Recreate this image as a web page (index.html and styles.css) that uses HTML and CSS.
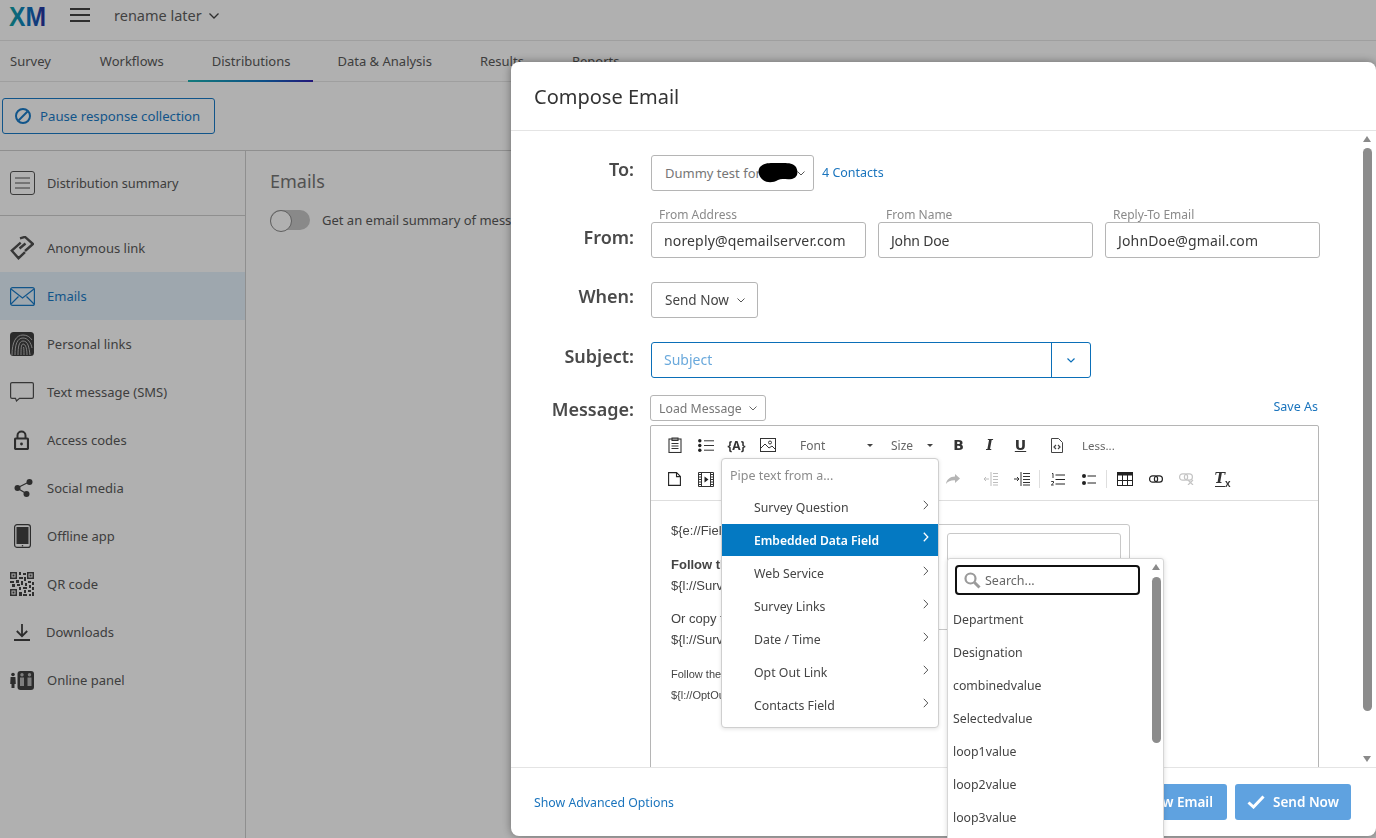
FILE: index.html
```html
<!DOCTYPE html>
<html lang="en">
<head>
<meta charset="utf-8">
<title>Compose Email</title>
<link rel="stylesheet" href="styles.css">
</head>
<body>
<div class="page">
  <header class="topbar">
    <svg class="logo" width="38" height="24" viewBox="0 0 38 24"><defs><linearGradient id="xm" x1="0" x2="1" y1="0" y2="0"><stop offset="0" stop-color="#12a5a5"/><stop offset=".5" stop-color="#0c7cc4"/><stop offset="1" stop-color="#2a2a9e"/></linearGradient></defs><text x="0" y="22.500" font-family="Liberation Sans" font-weight="700" font-size="28" fill="url(#xm)" textLength="37" lengthAdjust="spacingAndGlyphs">XM</text></svg>
    <svg class="burger" width="20" height="14" viewBox="0 0 20 14"><path d="M0 1h20M0 7h20M0 13h20" stroke="#444" stroke-width="2"/></svg>
    <span class="project">rename later</span>
    <svg class="chev-top" width="10" height="6" viewBox="0 0 10 6"><path d="M.5.5 5 5 9.500.5" fill="none" stroke="#444" stroke-width="1.300"/></svg>
  </header>
  <nav class="tabs">
    <a class="tab first">Survey</a>
    <a class="tab">Workflows</a>
    <a class="tab active">Distributions</a>
    <a class="tab">Data &amp; Analysis</a>
    <a class="tab">Results</a>
    <a class="tab">Reports</a>
  </nav>
  <div class="actionbar">
    <button class="pause">
      <svg width="18" height="18" viewBox="0 0 18 18"><circle cx="9" cy="9" r="7" fill="none" stroke="currentColor" stroke-width="2"/><path d="M4.500 13.500 13.500 4.500" stroke="currentColor" stroke-width="2"/></svg>
      Pause response collection
    </button>
  </div>
  <div class="content">
    <aside class="side">
      <div class="side-summary">
        <span class="ico"><svg width="26" height="24" viewBox="0 0 26 24"><rect x=".5" y=".5" width="24" height="23" rx="2.500" fill="none" stroke="#555"/><path d="M5 7h15M5 12h15M5 17h15" stroke="#555"/></svg></span>
        Distribution summary
      </div>
      <ul class="side-list">
        <li class="side-item"><span class="ico"><svg width="24" height="24" viewBox="0 0 24 24" fill="none" stroke="#505050" stroke-width="2.400"><path d="M10 2.300 15 .9 23 8l-8 7"/><path d="M10.700 6.700 1.800 14.700l6.700 7.500 6.500-6"/><path d="M9.500 12.500 15.500 7.500"/></svg></span>Anonymous link</li>
        <li class="side-item selected"><span class="ico"><svg width="25" height="19" viewBox="0 0 25 19" fill="none" stroke="currentColor" stroke-width="1.200"><rect x=".6" y=".6" width="23.800" height="17.800" rx="2"/><path d="M1 2l11.500 9L24 2M1 17l7.500-7.500M24 17l-7.500-7.500"/></svg></span>Emails</li>
        <li class="side-item"><span class="ico"><svg width="24" height="24" viewBox="0 0 24 24"><rect width="24" height="24" rx="3.500" fill="#3f3f3f"/><g fill="none" stroke="#b9b9b9" stroke-width="1"><path d="M2 23C2 10 6 3 13 3c4 0 7 2 9 5"/><path d="M5 23c0-10 2-17 8-17 5 0 8 5 9 10"/><path d="M8 23c0-8 1-14 5-14 5 0 6 6 7 14"/><path d="M11 23c0-5 0-11 2-11 3 0 4 6 4 11"/><path d="M14 23c0-3 0-7-.5-8"/></g></svg></span>Personal links</li>
        <li class="side-item"><span class="ico"><svg width="24" height="20" viewBox="0 0 24 20" fill="none" stroke="#505050" stroke-width="1.200"><path d="M2 .6h20a1.400 1.400 0 0 1 1.400 1.400v13a1.400 1.400 0 0 1-1.400 1.400H9.500L6.500 19l-1-2.600H2A1.400 1.400 0 0 1 .6 15V2A1.400 1.400 0 0 1 2 .6Z"/></svg></span>Text message (SMS)</li>
        <li class="side-item"><span class="ico ico-in"><svg width="15" height="20" viewBox="0 0 15 20"><path d="M3.500 9V5.500a4 4 0 0 1 8 0V9" fill="none" stroke="#424242" stroke-width="2"/><rect x="1" y="8.500" width="13" height="10.500" rx="1" fill="none" stroke="#424242" stroke-width="2.200"/><circle cx="7.500" cy="14" r="1.400" fill="#424242"/></svg></span>Access codes</li>
        <li class="side-item"><span class="ico ico-in"><svg width="19" height="18" viewBox="0 0 19 18"><path d="M3 9 15 3M3 9l10 6" stroke="#424242" stroke-width="1.200"/><circle cx="3.500" cy="9" r="3" fill="#424242"/><circle cx="15.500" cy="3" r="3" fill="#424242"/><circle cx="12.500" cy="15" r="3" fill="#424242"/></svg></span>Social media</li>
        <li class="side-item"><span class="ico ico-in"><svg width="17" height="24" viewBox="0 0 17 24"><rect x=".6" y=".6" width="15.800" height="22.800" rx="2.500" fill="none" stroke="#424242" stroke-width="1.200"/><rect x="2.500" y="3" width="12" height="17" fill="#424242"/><circle cx="8.500" cy="21.800" r=".8" fill="#424242"/></svg></span>Offline app</li>
        <li class="side-item"><span class="ico"><svg width="24" height="24" viewBox="0 0 24 24" fill="#444"><path d="M0 0h7v7H0zM1.500 1.500v4h4v-4zM2.500 2.500h2v2h-2zM17 0h7v7h-7zM18.500 1.500v4h4v-4zM19.500 2.500h2v2h-2zM0 17h7v7H0zM1.500 18.500v4h4v-4zM2.500 19.500h2v2h-2z" fill-rule="evenodd"/><path d="M9 0h2v3H9zM13 1h3v2h-3zM9 5h4v2H9zM14 5h2v4h-2zM0 9h4v2H0zM6 8h3v3H6zM11 9h2v4h-2zM18 9h3v2h-3zM22 10h2v3h-2zM2 12h3v3H2zM7 12h3v2H7zM15 11h2v3h-2zM19 13h2v3h-2zM9 15h2v3H9zM13 15h4v2h-4zM22 15h2v3h-2zM9 20h3v4H9zM14 18h2v3h-2zM18 18h3v2h-3zM13 22h4v2h-4zM19 22h2v2h-2zM22 20h2v4h-2z"/></svg></span>QR code</li>
        <li class="side-item downloads"><span class="ico ico-in"><svg width="16" height="17" viewBox="0 0 16 17" fill="none" stroke="#424242" stroke-width="1.800"><path d="M8 0v12M2.800 7 8 12.200 13.200 7M0 16h16"/></svg></span>Downloads</li>
        <li class="side-item"><span class="ico"><svg width="24" height="19" viewBox="0 0 24 19"><rect x="7.500" y="0" width="16.500" height="19" rx="3" fill="#424242"/><g fill="#b9b9b9"><circle cx="12" cy="3.800" r="1.700"/><path d="M10 6.500h4v8.500h-4z"/><circle cx="19.500" cy="3.800" r="1.700"/><path d="M17.500 6.500h4v8.500h-4z"/></g><circle cx="3" cy="3.500" r="1.800" fill="#424242"/><path d="M.6 6h4.800l.4 7H4.500v4h-3v-4H.2z" fill="#424242"/></svg></span>Online panel</li>
      </ul>
    </aside>
    <main class="main">
      <h2 class="main-title">Emails</h2>
      <div class="summary-row">
        <span class="toggle"></span>
        <span>Get an email summary of messages sent from this distribution</span>
      </div>
    </main>
  </div>
</div>

<div class="overlay"></div>

<section class="modal">
  <h1 class="modal-head">Compose Email</h1>
  <div class="modal-body">
    <div class="row row-to">
      <label class="row-label">To:</label>
      <div class="box select to-select">Dummy test for <svg class="chev" width="8" height="5" viewBox="0 0 8 5"><path d="M.5.5 4 4 7.500.5" fill="none" stroke="#555"/></svg><svg class="blob" width="40" height="22" viewBox="0 0 40 22"><path d="M2 5C6 0 14 1 20 1s15-1 18 4c3 6 1 11-4 12-6 1-10-1-14 1-5 3-11 3-15 0C1 15-1 9 2 5Z" fill="#000"/></svg></div>
      <a class="link contacts">4 Contacts</a>
    </div>
    <div class="row row-from">
      <label class="row-label">From:</label>
      <div class="field"><span class="field-label">From Address</span><div class="box input">noreply@qemailserver.com</div></div>
      <div class="field"><span class="field-label">From Name</span><div class="box input input-name">John Doe</div></div>
      <div class="field"><span class="field-label">Reply-To Email</span><div class="box input">JohnDoe@gmail.com</div></div>
    </div>
    <div class="row row-when">
      <label class="row-label">When:</label>
      <div class="box select when-select">Send Now <svg class="chev" width="8" height="5" viewBox="0 0 8 5"><path d="M.5.5 4 4 7.500.5" fill="none" stroke="#555"/></svg></div>
    </div>
    <div class="row row-subject">
      <label class="row-label">Subject:</label>
      <div class="subject">
        <span class="subject-input">Subject</span>
        <span class="subject-btn"><svg width="8" height="5" viewBox="0 0 8 5"><path d="M.5.500 4 4 7.500.5" fill="none" stroke="#0b6fb8" stroke-width="1.200"/></svg></span>
      </div>
    </div>
    <div class="row row-message">
      <label class="row-label">Message:</label>
      <div class="message">
        <div class="message-top">
          <button class="load">Load Message <svg width="8" height="5" viewBox="0 0 8 5"><path d="M.5.5 4 4 7.500.5" fill="none" stroke="#666"/></svg></button>
          <a class="link save-as">Save As</a>
        </div>
        <div class="editor">
          <div class="toolbar">
            <div class="tb-row">
              <span class="tb"><svg width="14" height="16" viewBox="0 0 14 16" fill="none" stroke="#333" stroke-width="1.100"><rect x="1" y="2" width="12" height="13.500"/><path d="M4 1h6v2.500H4zM3.500 6.500h7M3.500 9h7M3.500 11.500h7"/></svg></span>
              <span class="tb"><svg width="16" height="13" viewBox="0 0 16 13"><g fill="#222"><circle cx="1.800" cy="1.800" r="1.700"/><circle cx="1.800" cy="6.500" r="1.700"/><circle cx="1.800" cy="11.200" r="1.700"/></g><path d="M6 1.800h10M6 6.500h10M6 11.200h10" stroke="#333"/></svg></span>
              <span class="tb tb-piped">{A}</span>
              <span class="tb"><svg width="16" height="14" viewBox="0 0 16 14" fill="none" stroke="#333"><rect x=".5" y=".5" width="15" height="13"/><circle cx="10" cy="4.500" r="1.500"/><path d="m1 10 4-4 4 4 3-2 3 3"/></svg></span>
              <span class="tb-combo tb-font">Font<i class="caret"></i></span>
              <span class="tb-combo tb-size">Size<i class="caret"></i></span>
              <span class="tb tb-b">B</span>
              <span class="tb tb-i">I</span>
              <span class="tb tb-u">U</span>
              <span class="tb tb-src"><svg width="12" height="15" viewBox="0 0 12 15" fill="none" stroke="#444"><path d="M.5.5h7l4 4v10H.5z"/><path d="M5 7 3 9l2 2M7 7l2 2-2 2" stroke-width="1.200"/></svg></span>
              <span class="tb-less">Less...</span>
            </div>
            <div class="tb-row">
              <span class="tb"><svg width="13" height="14" viewBox="0 0 13 14" fill="none" stroke="#222" stroke-width="1.100"><path d="M.6.6h8l3.800 3.800v9H.6zM8.500.6v4h4"/></svg></span>
              <span class="tb"><svg width="16" height="15" viewBox="0 0 16 15"><path d="M.5.5h15v14H.5z" fill="none" stroke="#333"/><path d="M3.500 0v15M12.500 0v15" stroke="#333"/><path d="M1 2.500h2M1 5h2M1 7.500h2M1 10h2M1 12.500h2M13 2.500h2M13 5h2M13 7.500h2M13 10h2M13 12.500h2" stroke="#333"/><path d="m6.500 4.500 4 3-4 3z" fill="#222"/></svg></span>
              <span class="tb-gap"></span>
              <span class="tb"><svg width="14" height="10" viewBox="0 0 14 10"><path d="M9 0l5 4.500L9 9V6.200C5 6 2 7 0 10c.5-4.500 4-7.300 9-7.500z" fill="#b5b5b5"/></svg></span>
              <span class="tb tb-m"><svg width="14" height="14" viewBox="0 0 14 14" stroke="#bdbdbd"><path d="M7 0v14"/><path d="M9 1.500h5M9 4.500h5M9 7.500h5M9 10.500h5M9 13h5" /><path d="M5 7H0M2 5 0 7l2 2" fill="none"/></svg></span>
              <span class="tb"><svg width="16" height="14" viewBox="0 0 16 14" stroke="#333"><path d="M7 0v14"/><path d="M9 1.500h7M9 4.500h7M9 7.500h7M9 10.500h7M9 13h7"/><path d="M0 7h5M3 5l2 2-2 2" fill="none"/></svg></span>
              <span class="tb-sep"></span>
              <span class="tb"><svg width="14" height="13" viewBox="0 0 14 13"><path d="M4.500 2h9.500M4.500 6.500h9.500M4.500 11h9.500" stroke="#222"/><path d="M1 0.500h1V5M.2 8.500h2.300v1.500L.3 12h2.400" fill="none" stroke="#222" stroke-width=".9"/></svg></span>
              <span class="tb"><svg width="14" height="11" viewBox="0 0 14 11"><circle cx="2" cy="2" r="2" fill="#222"/><circle cx="2" cy="9" r="2" fill="#222"/><path d="M5.500 2H14M5.500 9H14" stroke="#222"/></svg></span>
              <span class="tb-sep"></span>
              <span class="tb"><svg width="16" height="14" viewBox="0 0 16 14"><rect x=".5" y=".5" width="15" height="13" fill="none" stroke="#222"/><path d="M0 0h16v3.500H0z" fill="#222"/><path d="M5.500 3v10M10.500 3v10M0 8.500h16" stroke="#222"/></svg></span>
              <span class="tb"><svg width="14" height="8" viewBox="0 0 14 8" fill="none" stroke="#222" stroke-width="1.200"><rect x=".6" y=".8" width="8" height="6.400" rx="3"/><rect x="5.400" y=".8" width="8" height="6.400" rx="3"/></svg></span>
              <span class="tb"><svg width="15" height="12" viewBox="0 0 15 12" fill="none" stroke="#c4c4c4" stroke-width="1.200"><rect x=".6" y=".8" width="8" height="6.400" rx="3"/><rect x="5.400" y=".8" width="8" height="6.400" rx="3"/><path d="m9 7 5 5M14 7l-5 5"/></svg></span>
              <span class="tb tb-clear"><i class="tx-t">T</i><i class="tx-x">x</i></span>
            </div>
          </div>
          <div class="ed-body">
            <div class="ed-text">
              <p class="ed-p">${e://Field/Message}</p>
              <p class="ed-p ed-gap"><b>Follow this link to the Survey:</b><br>${l://SurveyLink?d=Take%20the}</p>
              <p class="ed-p ed-gap2">Or copy the URL below:<br>${l://SurveyURL}</p>
              <p class="ed-small">Follow the link to opt out</p>
              <p class="ed-small ed-small2">${l://OptOutLink?d=Click}</p>
            </div>
            <div class="ed-frame"><div class="ed-inner"></div></div>
          </div>
        </div>
      </div>
    </div>
    <div class="vscroll"><i class="up"></i><i class="thumb"></i><i class="down"></i></div>
  </div>
  <footer class="modal-foot">
    <a class="link advanced">Show Advanced Options</a>
    <div class="foot-btns">
      <button class="send send-new">New Email</button>
      <button class="send send-now"><svg width="18" height="14" viewBox="0 0 18 14"><path d="M1.500 7.500 6.500 12 16.500 1.500" fill="none" stroke="#fff" stroke-width="3"/></svg>Send Now</button>
    </div>
  </footer>
</section>

<div class="pipe-menu">
  <div class="pipe-head">Pipe text from a...</div>
  <ul class="pipe-list">
    <li class="pipe-item">Survey Question<svg width="6" height="10" viewBox="0 0 6 10"><path d="m.8.8 4 4.200-4 4.200" fill="none" stroke="#555"/></svg></li>
    <li class="pipe-item on">Embedded Data Field<svg width="6" height="10" viewBox="0 0 6 10"><path d="m.8.8 4 4.200-4 4.200" fill="none" stroke="#fff" stroke-width="1.300"/></svg></li>
    <li class="pipe-item">Web Service<svg width="6" height="10" viewBox="0 0 6 10"><path d="m.8.8 4 4.200-4 4.200" fill="none" stroke="#555"/></svg></li>
    <li class="pipe-item">Survey Links<svg width="6" height="10" viewBox="0 0 6 10"><path d="m.8.8 4 4.200-4 4.200" fill="none" stroke="#555"/></svg></li>
    <li class="pipe-item">Date / Time<svg width="6" height="10" viewBox="0 0 6 10"><path d="m.8.8 4 4.200-4 4.200" fill="none" stroke="#555"/></svg></li>
    <li class="pipe-item">Opt Out Link<svg width="6" height="10" viewBox="0 0 6 10"><path d="m.8.8 4 4.200-4 4.200" fill="none" stroke="#555"/></svg></li>
    <li class="pipe-item">Contacts Field<svg width="6" height="10" viewBox="0 0 6 10"><path d="m.8.8 4 4.200-4 4.200" fill="none" stroke="#555"/></svg></li>
  </ul>
</div>

<div class="field-menu">
  <div class="search">
    <svg width="17" height="17" viewBox="0 0 17 17" fill="none" stroke="#9a9a9a"><circle cx="6.500" cy="6.500" r="5" stroke-width="2.200"/><path d="m10.500 10.500 5 5" stroke-width="3"/></svg>
    Search...
  </div>
  <ul class="field-list">
    <li>Department</li>
    <li>Designation</li>
    <li>combinedvalue</li>
    <li>Selectedvalue</li>
    <li>loop1value</li>
    <li>loop2value</li>
    <li>loop3value</li>
  </ul>
  <div class="mscroll"><i class="up"></i><i class="thumb"></i></div>
</div>
</body>
</html>
```

FILE: styles.css
```css
* { box-sizing: border-box; }
html, body { margin: 0; height: 100%; overflow: hidden; }
body { font-family: "Noto Sans", "Open Sans", sans-serif; color: #5a5a5a; background: #fff; font-size: 13px; }
ul { list-style: none; margin: 0; padding: 0; }
p, h1, h2 { margin: 0; font-weight: 400; }
button { font-family: inherit; }

.page { height: 838px; display: flex; flex-direction: column; }

.topbar { height: 41px; flex: none; display: flex; align-items: center; border-bottom: 1px solid #e6e6e6; padding: 0 0 10px 9px; }
.logo { margin-right: 23px; overflow: visible; }
.burger { margin-right: 24px; }
.project { font-size: 14.500px; margin-right: 7px; color: #5f5f5f; }
.chev-top { margin-top: 2px; }

.tabs { height: 41px; flex: none; display: flex; border-bottom: 1px solid #e6e6e6; font-size: 13px; }
.tab { padding: 0 24px; line-height: 41px; color: #5a5a5a; height: 41px; }
.tab.first { padding: 0 25px 0 10px; }
.tab.active { padding-right: 23px; border-bottom: 2px solid; border-image: linear-gradient(90deg, #1cb3b3, #1273c4 60%, #3420b0) 1; }

.actionbar { height: 69px; flex: none; padding: 16px 0 0 2px; border-bottom: 1px solid #cfcfcf; }
.pause { width: 213px; height: 36px; display: flex; align-items: center; gap: 8px; padding: 0 0 0 11px; background: transparent; border: 1.500px solid #1a7cc9; border-radius: 3px; color: #1a7cc9; font-size: 13.200px; white-space: nowrap; }

.content { flex: 1; display: flex; min-height: 0; }
.side { width: 246px; flex: none; border-right: 1px solid #cfcfcf; }
.side-summary { height: 65px; display: flex; align-items: center; border-bottom: 1px solid #cfcfcf; padding-left: 10px; font-size: 12.800px; }
.side-list { padding-top: 8px; }
.side-item { height: 48px; display: flex; align-items: center; padding-left: 10px; }
.side-item.selected { background: #e5f2fc; color: #1a7cc9; }
.ico { width: 37px; flex: none; display: flex; align-items: center; }
.ico-in { padding-left: 4px; }
.side-item.downloads .ico { width: 36px; }

.main { padding: 19px 0 0 24px; flex: 1; overflow: hidden; }
.main-title { font-size: 18px; line-height: 22px; color: #767676; }
.summary-row { display: flex; align-items: center; gap: 12px; margin-top: 18px; white-space: nowrap; }
.toggle { width: 40px; height: 20px; border-radius: 10px; background: #c7c7c7; position: relative; flex: none; }
.toggle::before { content: ""; position: absolute; left: 0; top: 0; width: 20px; height: 20px; border-radius: 50%; background: #fff; border: 1px solid #8a8a8a; }

.overlay { position: fixed; inset: 0; background: rgba(0, 0, 0, .31); }

.modal { position: fixed; left: 511px; top: 62px; width: 865px; height: 774px; background: #fff; border-radius: 8px; display: flex; flex-direction: column; box-shadow: 0 0 10px rgba(0, 0, 0, .4); overflow: hidden; }
.modal-head { height: 69px; flex: none; border-bottom: 1px solid #e4e4e4; padding-left: 23px; font-size: 20px; line-height: 70px; color: #333; }
.modal-body { flex: 1; min-height: 0; position: relative; overflow: hidden; padding-top: 24px; }
.modal-foot { height: 69px; flex: none; border-top: 1px solid #e4e4e4; display: flex; align-items: center; justify-content: space-between; padding: 0 25px 0 23px; }

.row { display: flex; align-items: flex-start; }
.row-label { width: 123px; flex: none; margin-right: 17px; text-align: right; font-size: 18px; font-weight: 600; color: #4a4a4a; line-height: 28px; }
.box { height: 36px; border: 1px solid #b5b5b5; border-radius: 3px; background: #fff; display: flex; align-items: center; font-size: 14px; }
.select { padding-left: 13px; gap: 8px; }
.to-select { width: 163px; color: #767676; font-size: 13px; position: relative; white-space: nowrap; gap: 0; }
.to-select .chev { position: absolute; left: 145px; top: 15px; }
.blob { position: absolute; left: 106px; top: 6px; }
.link { color: #1a74bd; font-size: 12.500px; }
.contacts { margin: 9px 0 0 8px; }

.row-from { margin-top: 16px; gap: 12px; }
.row-from .row-label { margin: 16px 5px 0 0; }
.field { width: 215px; }
.field-label { display: block; height: 15px; line-height: 15px; padding-left: 8px; font-size: 12px; color: #8a8a8a; }
.input { padding-left: 12px; color: #3a3a3a; letter-spacing: .15px; }
.input-name { letter-spacing: -.2px; }

.row-when { margin-top: 24px; }
.when-select { width: 107px; color: #444; font-size: 13.500px; }
.row-subject { margin-top: 24px; }
.subject { width: 440px; height: 36px; border: 1px solid #0b6fb8; border-radius: 3px; display: flex; }
.subject-input { flex: 1; padding-left: 12px; line-height: 34px; font-size: 14px; color: #6aa9dc; }
.subject-btn { width: 39px; border-left: 1px solid #0b6fb8; display: flex; align-items: center; justify-content: center; }

.row-message { margin-top: 17px; }
.row-message .row-label { margin-right: 16px; }
.message { width: 669px; }
.message-top { display: flex; justify-content: space-between; align-items: center; height: 26px; }
.load { width: 116px; height: 26px; border: 1px solid #b5b5b5; border-radius: 3px; background: #fff; color: #777; font-size: 12.300px; display: flex; align-items: center; gap: 7px; padding: 0 0 0 8px; }
.save-as { font-size: 12.500px; padding-right: 1px; margin-top: -4px; }

.editor { margin-top: 4px; height: 400px; border: 1px solid #b5b5b5; border-radius: 2px; }
.toolbar { height: 75px; border-bottom: 1px solid #dedede; padding: 5px 0 0 8px; }
.tb-row { display: flex; height: 28px; align-items: center; margin-bottom: 6px; }
.tb { width: 31px; height: 28px; flex: none; display: flex; align-items: center; justify-content: center; color: #333; }
.tb-piped { font-size: 12px; font-weight: 700; }
.tb-combo { flex: none; position: relative; font-size: 12px; color: #666; }
.tb-font { width: 100px; padding-left: 17px; }
.tb-size { width: 60px; padding-left: 8px; }
.caret { position: absolute; top: 7px; right: 10px; width: 0; height: 0; border: 3px solid transparent; border-top: 3.500px solid #444; border-bottom: 0; }
.tb-b, .tb-i, .tb-u { font-family: "DejaVu Sans", sans-serif; font-weight: 700; font-size: 14px; color: #333; }
.tb-i { font-family: "DejaVu Serif", serif; font-style: italic; }
.tb-u { text-decoration: underline; }
.tb-src { margin-left: 5px; }
.tb-less { margin-left: 10px; font-size: 11.500px; color: #666; }
.tb-gap { width: 216px; flex: none; }
.tb-m { margin-left: 7px; }
.tb-sep { width: 1px; height: 18px; background: #dedede; margin: 0 2px; flex: none; }
.tb-clear { margin-left: 5px; font-family: "DejaVu Serif", serif; font-weight: 700; color: #333; }
.tx-t { font-size: 14px; border-bottom: 1.500px solid #333; line-height: 15px; }
.tx-x { font-style: normal; font-size: 10px; font-family: "Liberation Sans", sans-serif; margin-top: 8px; }

.ed-body { display: flex; padding: 23px 0 0 20px; font-family: "Liberation Sans", sans-serif; color: #444; font-size: 13px; line-height: 21px; }
.ed-text { width: 50px; flex: none; margin-top: -4px; white-space: nowrap; overflow: hidden; }
.ed-p { line-height: 21px; }
.ed-gap { margin-top: 13px; }
.ed-gap2 { margin-top: 12px; }
.ed-small { font-size: 11px; line-height: 14px; margin-top: 17px; }
.ed-small2 { margin-top: 7px; }
.ed-frame { width: 225px; height: 106px; margin-left: 184px; border: 1px solid #c8c8c8; border-radius: 3px; padding: 8px 8px 0 41px; }
.ed-inner { height: 80px; border: 1px solid #c8c8c8; border-radius: 3px; }

.vscroll { position: absolute; right: 4px; top: 0; bottom: 0; width: 9px; }
.vscroll .up, .mscroll .up { position: absolute; top: 5px; left: 0; width: 0; height: 0; border: 4.500px solid transparent; border-bottom: 6px solid #8a8a8a; border-top: 0; }
.vscroll .thumb { position: absolute; left: 0; top: 17px; width: 9px; height: 563px; border-radius: 5px; background: #8c8c8c; }
.vscroll .down { position: absolute; left: 0; bottom: 5px; width: 0; height: 0; border: 4.500px solid transparent; border-top: 6px solid #8a8a8a; border-bottom: 0; }

.advanced { font-size: 12.300px; }
.foot-btns { display: flex; gap: 8px; }
.send { height: 36px; border: 0; border-radius: 3px; background: #5fa2e0; color: #fff; font-size: 13.500px; font-weight: 600; display: flex; align-items: center; }
.send-new { width: 120px; justify-content: flex-end; padding-right: 14px; }
.send-now { width: 116px; padding: 0 0 0 12px; gap: 8px; }

.pipe-menu { position: fixed; left: 721px; top: 458px; width: 218px; height: 270px; background: #fff; border: 1px solid #cfcfcf; border-radius: 4px; box-shadow: 0 1px 4px rgba(0, 0, 0, .12); }
.pipe-head { height: 32px; padding: 7px 0 0 8px; line-height: 20px; font-size: 12.500px; color: #8c8c8c; }
.pipe-item { height: 33px; display: flex; align-items: center; justify-content: space-between; padding: 0 9px 0 32px; font-size: 12.300px; color: #444; }
.pipe-item svg { margin-top: -6px; }
.pipe-item.on { height: 32px; margin-bottom: 1px; background: #0479c2; color: #fff; font-weight: 600; font-size: 12.100px; }

.field-menu { position: fixed; left: 947px; top: 558px; width: 217px; height: 290px; background: #fff; border: 1px solid #d6d6d6; border-radius: 3px; box-shadow: 0 1px 5px rgba(0, 0, 0, .15); }
.search { margin: 6px 0 0 7px; width: 185px; height: 30px; border: 2px solid #111; border-radius: 4px; display: flex; align-items: center; gap: 4px; padding-left: 7px; font-size: 12.500px; color: #666; }
.field-list { margin-top: 8px; }
.field-list li { height: 33px; line-height: 33px; padding-left: 5px; font-size: 12.300px; color: #444; }
.mscroll { position: absolute; left: 204px; top: 0; width: 9px; bottom: 0; }
.mscroll .thumb { position: absolute; left: 0; top: 18px; width: 9px; height: 166px; border-radius: 5px; background: #8c8c8c; }
```
